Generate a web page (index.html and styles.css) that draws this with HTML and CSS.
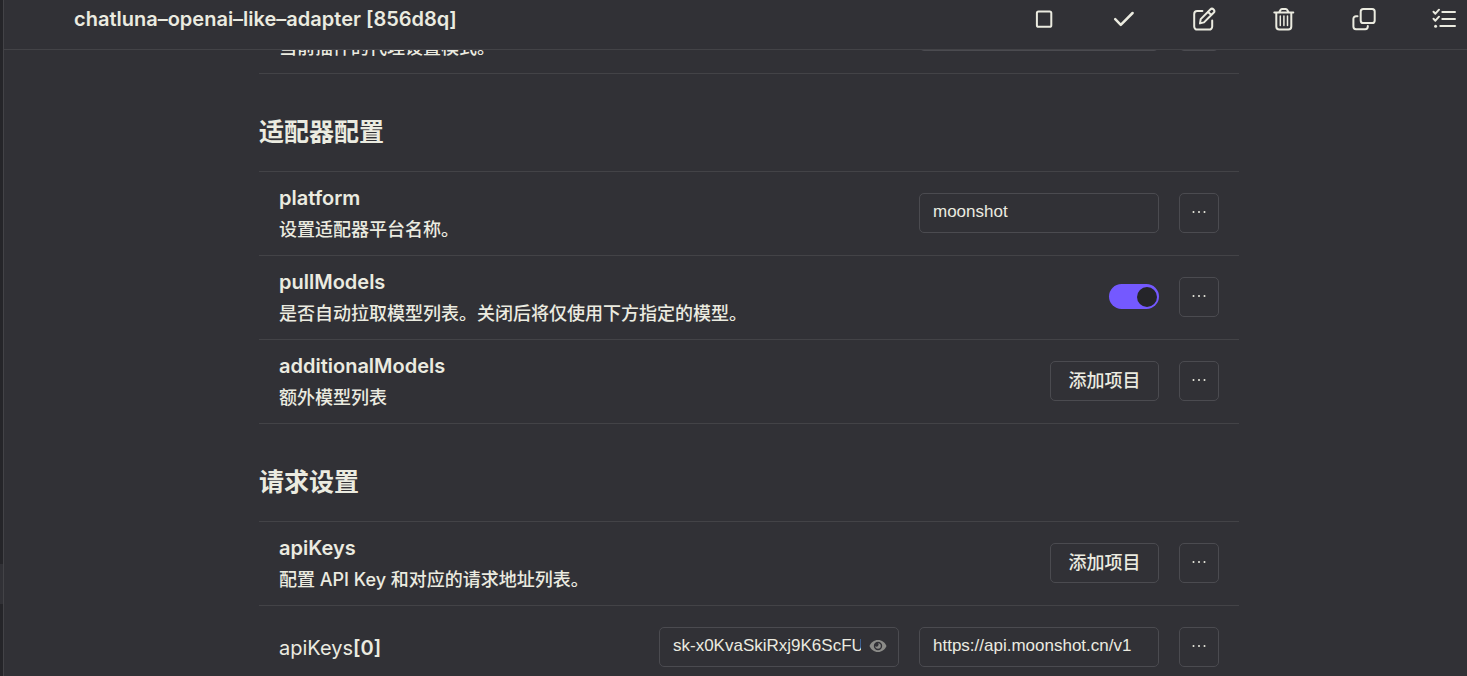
FILE: index.html
```
<!DOCTYPE html>
<html lang="zh-CN">
<head>
<meta charset="utf-8">
<meta name="viewport" content="width=device-width, initial-scale=1">
<title>chatluna-openai-like-adapter</title>
<link rel="stylesheet" href="styles.css">
</head>
<body>
<div class="app">
  <aside class="rail"><div class="rail-item"></div></aside>
  <div class="panel">
    <header class="topbar">
      <h1 class="topbar-title">chatluna–openai–like–adapter [856d8q]</h1>
      <nav class="actions">
        <button class="action" type="button" aria-label="停用插件"><svg viewBox="0 0 24 24"><rect x="4.900" y="4.400" width="14.400" height="15.400" rx="1.600"/></svg></button>
        <button class="action" type="button" aria-label="保存配置"><svg viewBox="0 0 24 24"><path class="thick" d="M3.200 12.200l5.600 5.600L20.600 6"/></svg></button>
        <button class="action" type="button" aria-label="重命名"><svg viewBox="0 0 24 24"><path d="M10.400 4H5.200a3 3 0 0 0-3 3v12.600a3 3 0 0 0 3 3H17.200a3 3 0 0 0 3-3V13.500"/><path d="M8 16.400l.7-4.300 9.600-9.600a2.300 2.300 0 0 1 3.300 3.300L12 15.400zM16 4.800l3.200 3.200"/></svg></button>
        <button class="action" type="button" aria-label="移除插件"><svg viewBox="0 0 24 24"><path d="M2.300 5.400h19M4.300 5.400V19.400a3 3 0 0 0 3 3h9a3 3 0 0 0 3-3V5.400M7.200 5.200l1.200-2.200a1.800 1.800 0 0 1 1.600-1h3.700a1.800 1.800 0 0 1 1.600 1l1.200 2.200"/><path class="thin" d="M8.300 9v9.500M11.900 9v9.500M15.500 9v9.500"/></svg></button>
        <button class="action" type="button" aria-label="克隆配置"><svg viewBox="0 0 24 24"><rect x="8.700" y="2" width="14" height="14" rx="2.600"/><path d="M5.500 9.200H4a2.600 2.600 0 0 0-2.600 2.600V19.600A2.600 2.600 0 0 0 4 22.200H13.200a2.600 2.600 0 0 0 2.600-2.600V19"/></svg></button>
        <button class="action" type="button" aria-label="管理多份配置"><svg viewBox="0 0 24 24"><path d="M1.500 4.800l1.900 1.900 3.600-4M1.500 11.800l1.900 1.900 3.600-4M10.300 4.900H23M10.300 12H23M8.300 19.100H23"/><circle class="dot" cx="3.600" cy="19.200" r="1.500"/></svg></button>
      </nav>
    </header>
    <main class="scroller">
      <form class="form">
        <div class="row">
          <div class="info">
            <p class="desc">当前插件的代理设置模式。</p>
          </div>
          <div class="controls">
            <input class="field" type="text" aria-label="代理模式">
            <button class="more" type="button" aria-label="更多"><svg viewBox="0 0 16 16"><circle cx="2.500" cy="8" r="1"/><circle cx="8" cy="8" r="1"/><circle cx="13.500" cy="8" r="1"/></svg></button>
          </div>
        </div>

        <h2 class="section-title">适配器配置</h2>
        <div class="row">
          <div class="info">
            <h3 class="name"><label for="platform">platform</label></h3>
            <p class="desc">设置适配器平台名称。</p>
          </div>
          <div class="controls">
            <input class="field" id="platform" type="text" value="moonshot">
            <button class="more" type="button" aria-label="更多"><svg viewBox="0 0 16 16"><circle cx="2.500" cy="8" r="1"/><circle cx="8" cy="8" r="1"/><circle cx="13.500" cy="8" r="1"/></svg></button>
          </div>
        </div>
        <div class="row">
          <div class="info">
            <h3 class="name"><label for="pull">pullModels</label></h3>
            <p class="desc">是否自动拉取模型列表。关闭后将仅使用下方指定的模型。</p>
          </div>
          <div class="controls">
            <input class="switch" id="pull" type="checkbox" role="switch" checked>
            <button class="more" type="button" aria-label="更多"><svg viewBox="0 0 16 16"><circle cx="2.500" cy="8" r="1"/><circle cx="8" cy="8" r="1"/><circle cx="13.500" cy="8" r="1"/></svg></button>
          </div>
        </div>
        <div class="row">
          <div class="info">
            <h3 class="name">additionalModels</h3>
            <p class="desc">额外模型列表</p>
          </div>
          <div class="controls">
            <button class="add" type="button">添加项目</button>
            <button class="more" type="button" aria-label="更多"><svg viewBox="0 0 16 16"><circle cx="2.500" cy="8" r="1"/><circle cx="8" cy="8" r="1"/><circle cx="13.500" cy="8" r="1"/></svg></button>
          </div>
        </div>

        <h2 class="section-title">请求设置</h2>
        <div class="row">
          <div class="info">
            <h3 class="name">apiKeys</h3>
            <p class="desc">配置 API Key 和对应的请求地址列表。</p>
          </div>
          <div class="controls">
            <button class="add" type="button">添加项目</button>
            <button class="more" type="button" aria-label="更多"><svg viewBox="0 0 16 16"><circle cx="2.500" cy="8" r="1"/><circle cx="8" cy="8" r="1"/><circle cx="13.500" cy="8" r="1"/></svg></button>
          </div>
        </div>
        <div class="row row-item">
          <h3 class="name"><span class="prefix">apiKeys</span>[0]</h3>
          <div class="controls">
            <div class="field secret">
              <input class="secret-input" type="text" aria-label="API Key" value="sk-x0KvaSkiRxj9K6ScFUq2">
              <button class="eye" type="button" aria-label="显示或隐藏"><svg viewBox="0 0 18 14"><path fill-rule="evenodd" d="M9 1C5 1 2 3.500.500 7 2 10.500 5 13 9 13s7-2.500 8.500-6C16 3.500 13 1 9 1zm0 1.800a4.200 4.200 0 1 1 0 8.400 4.200 4.200 0 0 1 0-8.400z"/><path d="M9 4.200a2.800 2.800 0 1 1-2.800 2.800A1.500 1.500 0 0 0 9 4.200z"/></svg></button>
            </div>
            <input class="field" type="text" aria-label="请求地址" value="https://api.moonshot.cn/v1">
            <button class="more" type="button" aria-label="更多"><svg viewBox="0 0 16 16"><circle cx="2.500" cy="8" r="1"/><circle cx="8" cy="8" r="1"/><circle cx="13.500" cy="8" r="1"/></svg></button>
          </div>
        </div>
      </form>
    </main>
  </div>
</div>
</body>
</html>
```
FILE: styles.css
```
:root {
  --bg: #313136;
  --rail: #252529;
  --line: #434347;
  --control-line: #4b4b50;
  --text: #ebebe0;
  --accent: #7459ff;
}

* {
  box-sizing: border-box;
}

body {
  margin: 0;
  background: var(--bg);
  color: var(--text);
  font-family: Inter, "Noto Sans CJK SC", sans-serif;
  font-size: 18px;
}

h1, h2, h3, p {
  margin: 0;
}

button, input {
  font: inherit;
  color: inherit;
}

.app {
  display: flex;
  height: 100vh;
  overflow: hidden;
}

.rail {
  display: flex;
  flex-direction: column;
  justify-content: flex-end;
  flex: none;
  width: 4px;
  padding-bottom: 72px;
  background: var(--rail);
  border-right: 1px solid var(--line);
}

.rail-item {
  height: 40px;
  background: var(--bg);
}

.panel {
  display: flex;
  flex-direction: column;
  flex: 1;
  min-width: 0;
}

.topbar {
  display: flex;
  flex: none;
  justify-content: space-between;
  align-items: center;
  height: 50px;
  padding: 0 0 11px 70px;
  border-bottom: 1px solid var(--line);
}

.topbar-title {
  font-size: 20px;
  line-height: 32px;
  font-weight: 600;
  white-space: nowrap;
}

.actions {
  display: flex;
  gap: 34px;
}

.action {
  display: grid;
  place-items: center;
  width: 46px;
  height: 38px;
  padding: 0;
  border: 0;
  background: none;
}

.action svg {
  width: 24px;
  height: 24px;
  fill: none;
  stroke: var(--text);
  stroke-width: 2;
  stroke-linecap: round;
  stroke-linejoin: round;
}

.action .thick {
  stroke-width: 2.5;
}

.action .thin {
  stroke-width: 1.5;
}

.action .dot {
  fill: var(--text);
  stroke: none;
}

.scroller {
  flex: 1;
  min-height: 0;
  overflow: hidden;
  padding-left: 27px;
}

/* The list is scrolled so that its first row is partly under the top bar. */
.form {
  max-width: 980px;
  margin: -60px auto 0;
}

.section-title {
  padding: 40px 0 21px;
  border-bottom: 1px solid var(--line);
  font-size: 25px;
  line-height: 36px;
  font-weight: 700;
}

.row {
  display: flex;
  justify-content: space-between;
  align-items: center;
  gap: 20px;
  min-height: 84px;
  padding: 10px 20px;
  border-bottom: 1px solid var(--line);
}

.row-item {
  padding: 21px 20px;
}

.info {
  align-self: flex-end;
}

.name {
  font-size: 20px;
  line-height: 32px;
  font-weight: 600;
}

.prefix {
  font-weight: 400;
}

.desc {
  line-height: 31px;
  font-weight: 500;
}

.controls {
  display: flex;
  align-items: center;
  gap: 20px;
  padding-bottom: 2px;
}

.field,
.add,
.more {
  height: 40px;
  border: 1px solid var(--control-line);
  border-radius: 5px;
  background: none;
}

.field {
  width: 240px;
  padding: 0 13px 2px;
  font-family: "Liberation Sans", "Noto Sans CJK SC", sans-serif;
  font-size: 17px;
  outline: none;
}

.secret {
  display: flex;
  align-items: center;
  gap: 8px;
  padding-right: 11px;
}

.secret-input {
  flex: 1;
  min-width: 0;
  padding: 0;
  border: 0;
  background: none;
  outline: none;
}

.eye {
  display: grid;
  flex: none;
  padding: 0;
  border: 0;
  background: none;
}

.eye svg {
  width: 18px;
  height: 14px;
  fill: #8b8b88;
}

.add {
  min-width: 109px;
  padding: 0 16px 3px;
  font-weight: 500;
}

.more {
  display: grid;
  place-items: center;
  width: 40px;
  padding: 0 0 2px;
}

.more svg {
  width: 16px;
  height: 16px;
  fill: var(--text);
}

.switch {
  appearance: none;
  display: flex;
  align-items: center;
  justify-content: flex-start;
  width: 50px;
  height: 25px;
  margin: 0;
  padding: 2px;
  border-radius: 13px;
  background: var(--control-line);
}

.switch::before {
  content: "";
  width: 20px;
  height: 20px;
  border-radius: 50%;
  background: var(--rail);
}

.switch:checked {
  justify-content: flex-end;
  background: var(--accent);
}
```
